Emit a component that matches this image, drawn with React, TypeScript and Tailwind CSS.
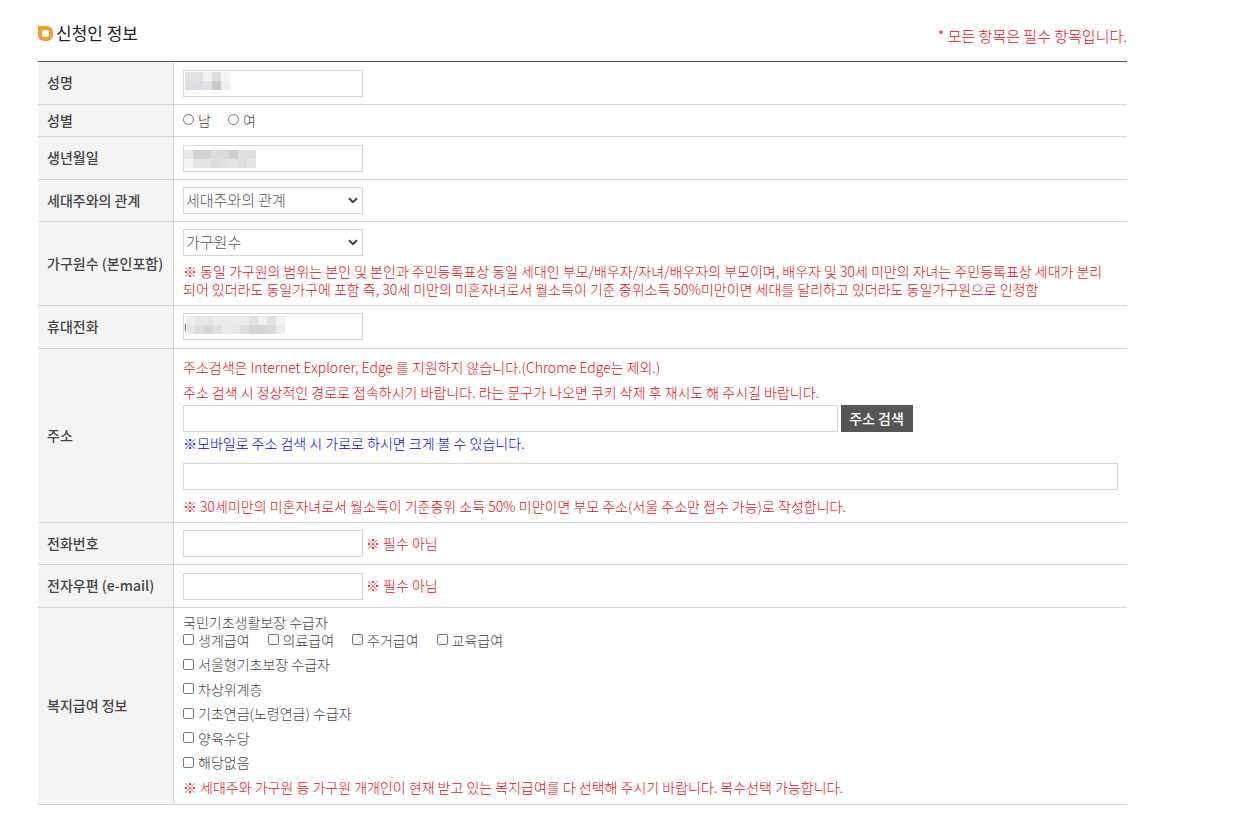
import type { ReactNode } from "react";

const inputClass =
  "h-[27px] border border-[#d6d6d6] bg-white text-[15px] text-[#555] outline-none";

const benefits = ["생계급여", "의료급여", "주거급여", "교육급여"];

const otherBenefits = [
  "서울형기초보장 수급자",
  "차상위계층",
  "기초연금(노령연금) 수급자",
  "양육수당",
  "해당없음",
];

// blurred-out personal data, one colour per block
const nameMask = [
  ["#e3e1e1", "#e0e2e8", "#f1f3f3", "#dfdfde", "#f5f4f7"],
  ["#e3dedb", "#d9dde7", "#e0e2e1", "#cac9c8", "#eeedf1"],
];
const birthMask = [
  ["#e9e9e9", "#d2d2d2", "#d2d2d2", "#dfdad8", "#d9dadb", "#cecece", "#dedfe2", "#dddfe1"],
  ["#f3f3f3", "#e3e3e3", "#e3e3e3", "#dedede", "#e0e0e2", "#e5e1e1", "#dedee0", "#e5e6eb"],
];
const phoneMask = [
  ["#ececec", "#e8e8e9", "#e5e5e5", "#ebebeb", "#ebebe9", "#ebebec", "#ecece9", "#e1e1e3", "#eeeeec", "#e2e2e4", "#f1f2f2"],
  ["#e6e6e8", "#dfdee0", "#d9d7d8", "#e0e1e3", "#ebecf0", "#e9e9e9", "#dedede", "#d5d5d7", "#d4d5d7", "#dadad9", "#ebecef"],
];

function Mask({ rows, place }: { rows: string[][]; place: string }) {
  return (
    <span className={`pointer-events-none absolute flex flex-col ${place}`} aria-hidden="true">
      {rows.map((row, i) => (
        <span key={i} className="flex">
          {row.map((color, j) => (
            <span key={j} className="h-[9px] w-[9px]" style={{ backgroundColor: color }} />
          ))}
        </span>
      ))}
    </span>
  );
}

function Row({
  label,
  htmlFor,
  height,
  children,
}: {
  label: string;
  htmlFor?: string;
  height: string;
  children: ReactNode;
}) {
  return (
    <tr className={height}>
      <th
        scope="row"
        className="border-b border-r border-[#d6d6d6] bg-[#f4f4f4] pb-[2px] pl-[9px] text-left align-middle font-medium text-[#444]"
      >
        {htmlFor ? <label htmlFor={htmlFor}>{label}</label> : label}
      </th>
      <td className="border-b border-[#d6d6d6] px-[9px] align-middle">{children}</td>
    </tr>
  );
}

function SelectBox({ id, text }: { id: string; text: string }) {
  return (
    <div className="relative w-[180px]">
      <select
        id={id}
        className="block h-[27px] w-full appearance-none border border-[#d6d6d6] bg-white pb-[2px] pl-[2px] pr-5 text-[15px] leading-[18px] text-[#555] outline-none"
      >
        <option>{text}</option>
      </select>
      <svg
        className="pointer-events-none absolute right-[5px] top-[10px]"
        width="10"
        height="7"
        viewBox="0 0 10 7"
        fill="none"
      >
        <path d="M1 1.2 5 5.2 9 1.2" stroke="#444" strokeWidth="2" />
      </svg>
    </div>
  );
}

function Check({ label }: { label: string }) {
  return (
    <label className="flex items-center gap-[4px]">
      <input
        type="checkbox"
        className="h-[11px] w-[11px] appearance-none rounded-[2px] border border-[#767676] bg-white"
      />
      {label}
    </label>
  );
}

function Radio({ label }: { label: string }) {
  return (
    <label className="flex items-center gap-[4px]">
      <input
        type="radio"
        name="gender"
        className="h-[11px] w-[11px] appearance-none rounded-full border border-[#767676] bg-white"
      />
      {label}
    </label>
  );
}

export default function App() {
  return (
    <main className="bg-white pb-5 pl-[38px] pr-[109px] pt-[20px] font-['Noto_Sans_CJK_KR','Liberation_Sans',sans-serif] text-[14px] font-light leading-[18px] text-[#444]">
      <div className="flex h-[41px] items-start justify-between">
        <h2 className="flex items-center gap-[3px] text-[17px] font-normal leading-[26px] text-[#222]">
          <svg width="15" height="15" viewBox="0 0 15 15">
            <path
              d="M0 0h9a6 6 0 0 1 6 6v3a6 6 0 0 1-6 6H6a6 6 0 0 1-6-6z"
              fill="#f49c38"
            />
            <rect x="4" y="4" width="7" height="7" rx="2" fill="#fff" />
          </svg>
          신청인 정보
        </h2>
        <p className="pt-[7px] text-[15px] text-[#e60c12]">* 모든 항목은 필수 항목입니다.</p>
      </div>

      <form>
        <table className="w-full table-fixed border-separate border-spacing-0 border-t border-[#555]">
          <colgroup>
            <col className="w-[136px]" />
            <col />
          </colgroup>
          <tbody>
            <Row label="성명" htmlFor="name" height="h-[43px]">
              <div className="relative w-[180px]">
                <input id="name" type="text" className={`${inputClass} block w-full`} />
                <Mask rows={nameMask} place="left-[2px] top-[2px]" />
              </div>
            </Row>

            <Row label="성별" height="h-[32px]">
              <div className="flex gap-[17px] pb-[2px]">
                <Radio label="남" />
                <Radio label="여" />
              </div>
            </Row>

            <Row label="생년월일" htmlFor="birth" height="h-[43px]">
              <div className="relative w-[180px]">
                <input id="birth" type="text" className={`${inputClass} block w-full`} />
                <Mask rows={birthMask} place="left-[1px] top-[5px]" />
              </div>
            </Row>

            <Row label="세대주와의 관계" htmlFor="relation" height="h-[42px]">
              <SelectBox id="relation" text="세대주와의 관계" />
            </Row>

            <Row label="가구원수 (본인포함)" htmlFor="members" height="h-[84px]">
              <SelectBox id="members" text="가구원수" />
              <p className="pt-[6px] text-[#e60c12]">
                ※ 동일 가구원의 범위는 본인 및 본인과 주민등록표상 동일 세대인 부모/배우자/자녀/배우자의 부모이며, 배우자 및 30세 미만의 자녀는 주민등록표상 세대가 분리
                <br />
                되어 있더라도 동일가구에 포함 즉, 30세 미만의 미혼자녀로서 월소득이 기준 중위소득 50%미만이면 세대를 달리하고 있더라도 동일가구원으로 인정함
              </p>
            </Row>

            <Row label="휴대전화" htmlFor="mobile" height="h-[43px]">
              <div className="relative mb-[1px] w-[180px]">
                <input
                  id="mobile"
                  type="tel"
                  defaultValue="0"
                  className={`${inputClass} block w-full`}
                />
                <Mask rows={phoneMask} place="left-[3px] top-[3px]" />
              </div>
            </Row>

            <Row label="주소" htmlFor="address" height="h-[174px]">
              <div className="pt-[2px] text-[#e60c12]">
                <p className="mb-[7px]">주소검색은 Internet Explorer, Edge 를 지원하지 않습니다.(Chrome Edge는 제외.)</p>
                <p className="mb-[4px]">
                  주소 검색 시 정상적인 경로로 접속하시기 바랍니다. 라는 문구가 나오면 쿠키 삭제 후 재시도 해 주시길 바랍니다.
                </p>
                <div className="flex gap-[3px]">
                  <input id="address" type="text" className={`${inputClass} w-[70%]`} />
                  <button
                    type="button"
                    className="h-[27px] w-[72px] bg-[#555] pb-[2px] font-medium text-white"
                  >
                    주소 검색
                  </button>
                </div>
                <p className="mt-[2px] text-[#0000ff]">※모바일로 주소 검색 시 가로로 하시면 크게 볼 수 있습니다.</p>
                <input
                  type="text"
                  aria-label="상세 주소"
                  className={`${inputClass} mb-[7px] mt-[11px] block w-full`}
                />
                <p>※ 30세미만의 미혼자녀로서 월소득이 기준중위 소득 50% 미만이면 부모 주소(서울 주소만 접수 가능)로 작성합니다.</p>
              </div>
            </Row>

            <Row label="전화번호" htmlFor="phone" height="h-[42px]">
              <div className="flex items-center gap-[3px]">
                <input id="phone" type="tel" className={`${inputClass} w-[180px]`} />
                <span className="pb-[2px] text-[#e60c12]">※ 필수 아님</span>
              </div>
            </Row>

            <Row label="전자우편 (e-mail)" htmlFor="email" height="h-[43px]">
              <div className="flex items-center gap-[3px]">
                <input id="email" type="email" className={`${inputClass} w-[180px]`} />
                <span className="pb-[2px] text-[#e60c12]">※ 필수 아님</span>
              </div>
            </Row>

            <Row label="복지급여 정보" height="h-[197px]">
              <p>국민기초생활보장 수급자</p>
              <div className="mb-[4px] flex h-[165px] flex-col justify-between">
                <div className="flex gap-[18px]">
                  {benefits.map((item) => (
                    <Check key={item} label={item} />
                  ))}
                </div>
                {otherBenefits.map((item) => (
                  <Check key={item} label={item} />
                ))}
                <p className="text-[#e60c12]">
                  ※ 세대주와 가구원 등 가구원 개개인이 현재 받고 있는 복지급여를 다 선택해 주시기 바랍니다. 복수선택 가능합니다.
                </p>
              </div>
            </Row>
          </tbody>
        </table>
      </form>
    </main>
  );
}
